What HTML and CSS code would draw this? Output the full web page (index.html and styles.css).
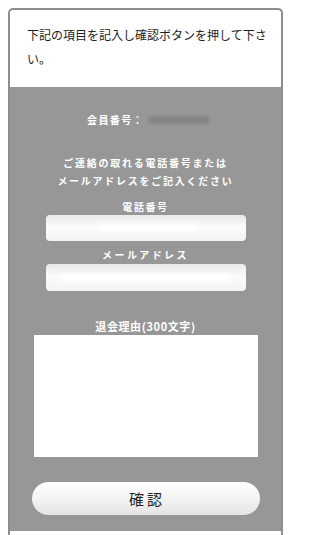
FILE: index.html
```html
<!DOCTYPE html>
<html lang="ja">
<head>
<meta charset="utf-8">
<title>退会</title>
<link rel="stylesheet" href="styles.css">
</head>
<body>
<div class="card">
  <div class="intro">下記の項目を記入し確認ボタンを押して下さい。</div>
  <form class="panel">
    <div class="member">会員番号：<span class="redact"></span></div>
    <p class="notice">ご連絡の取れる電話番号または<br>メールアドレスをご記入ください</p>
    <label class="label label-phone">電話番号</label>
    <div class="field"><span class="field-blur blur-phone"></span></div>
    <label class="label label-mail">メールアドレス</label>
    <div class="field field-mail"><span class="field-blur blur-mail"></span></div>
    <label class="label label-reason">退会理由(300文字)</label>
    <textarea class="reason"></textarea>
    <button type="button" class="submit">確認</button>
  </form>
</div>
</body>
</html>
```
FILE: styles.css
```css
html, body {
  margin: 0;
  padding: 0;
  background: #fff;
}
body {
  font-family: "Noto Sans CJK JP", "Noto Sans", sans-serif;
  width: 291px;
  height: 535px;
  overflow: hidden;
}
.card {
  box-sizing: border-box;
  width: 275px;
  margin: 8px 0 0 8px;
  border: 2px solid #8e8e8e;
  border-bottom: none;
  border-radius: 5px 5px 0 0;
  overflow: hidden;
  padding-bottom: 10px;
  background: #fff;
}
.intro {
  height: 77px;
  box-sizing: border-box;
  padding: 13px 12px 0 17px;
  font-size: 12px;
  line-height: 24px;
  color: #1e1e1e;
}
.panel {
  background: #979797;
  height: 444px;
  box-sizing: border-box;
  padding: 24px 0 0;
  display: flex;
  flex-direction: column;
  align-items: center;
  color: #fff;
  margin: 0;
}
.member {
  font-size: 10px;
  line-height: 18px;
  font-weight: 700;
  letter-spacing: 1.4px;
  display: flex;
  align-items: center;
  margin-left: 6px;
}
.redact {
  display: inline-block;
  width: 62px;
  height: 8px;
  margin-left: 4px;
  background: #858585;
  border-radius: 5px;
  filter: blur(1.5px);
}
.notice {
  margin: 25px 0 0;
  font-size: 10px;
  line-height: 18px;
  font-weight: 700;
  letter-spacing: 1.75px;
  text-align: center;
}
.label {
  font-size: 10px;
  line-height: 14px;
  font-weight: 700;
  letter-spacing: 1.6px;
}
.label-phone { margin-top: 10px; }
.label-mail { margin-top: 7px; letter-spacing: 2.4px; }
.label-reason { margin-top: 28px; letter-spacing: 0.6px; font-size: 11px; }
.field {
  width: 200px;
  height: 26px;
  margin-top: 1px;
  border-radius: 4px;
  background: linear-gradient(#e9e9e9, #fbfbfb 45%, #f3f3f3);
  display: flex;
  align-items: center;
  justify-content: center;
}
.field-mail {
  margin-top: 2px;
  height: 27px;
}
.field-blur {
  display: block;
  height: 8px;
  background: #fff;
  border-radius: 6px;
  filter: blur(2px);
}
.blur-phone { width: 100px; }
.blur-mail { width: 170px; }
.reason {
  box-sizing: border-box;
  width: 224px;
  height: 122px;
  margin-top: 2px;
  border: none;
  background: #fff;
  padding: 0;
  resize: none;
  display: block;
}
.submit {
  margin-top: 25px;
  width: 228px;
  height: 33px;
  border: none;
  border-radius: 17px;
  background: linear-gradient(#ffffff, #f4f4f4 50%, #e4e4e4);
  font-family: "Noto Sans CJK JP", sans-serif;
  font-size: 15px;
  letter-spacing: 3px;
  color: #222;
  padding: 0 0 0 3px;
}
```
